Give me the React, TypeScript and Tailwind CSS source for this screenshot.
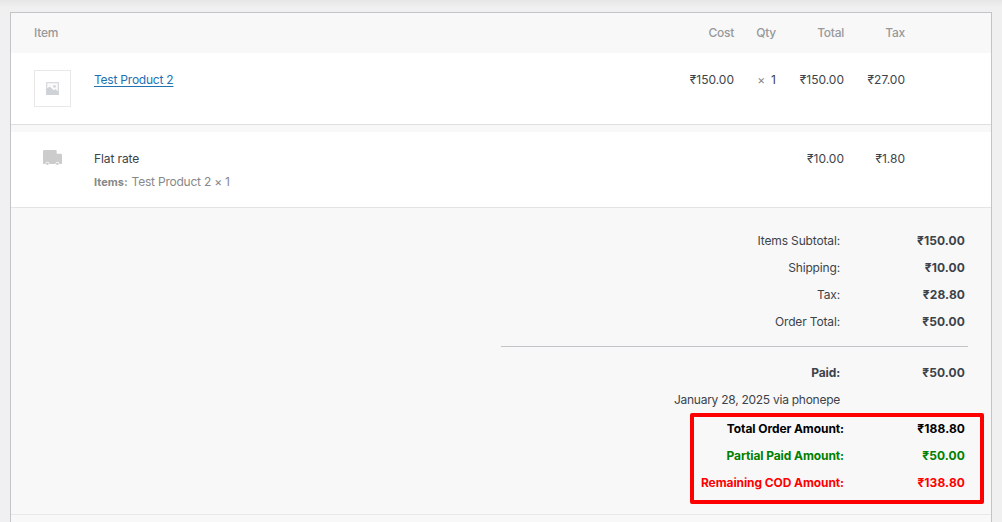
import React from 'react';

interface TotalLine {
  label: string;
  amount: string;
  className?: string;
}

const totals: TotalLine[] = [
  { label: 'Items Subtotal:', amount: '₹150.00' },
  { label: 'Shipping:', amount: '₹10.00' },
  { label: 'Tax:', amount: '₹28.80' },
  { label: 'Order Total:', amount: '₹50.00' },
];

const codTotals: TotalLine[] = [
  { label: 'Total Order Amount:', amount: '₹188.80', className: 'text-black' },
  { label: 'Partial Paid Amount:', amount: '₹50.00', className: 'text-[#008000]' },
  { label: 'Remaining COD Amount:', amount: '₹138.80', className: 'text-[#ff0000]' },
];

const columns =
  'grid grid-cols-[60px_1fr_80px_42px_68px_61px_86px] pl-[23px]';

function PlaceholderImage() {
  return (
    <svg width="13" height="13" viewBox="0 0 13 13">
      <rect width="13" height="13" fill="#d9dbde" />
      <path
        d="M1.3 1.3h10.4v8.2L9.6 7.3 7.8 8.6 3.8 5.2 1.3 6.5z"
        fill="#fafafa"
      />
      <path d="M0 7l3.8-2.2 4 3.8 1.8-1.3L13 10.2V13H0z" fill="#cfd2d6" />
      <circle cx="8.5" cy="4.4" r="1.4" fill="#d3d6da" />
    </svg>
  );
}

function TruckIcon() {
  return (
    <svg width="20" height="16" viewBox="0 0 20 16">
      <path
        d="M1.2 0h11.6q.9 0 .9.9v2.8h4q1.3 0 1.3 1.3v8.2q0 .8-.8.8H.8q-.8 0-.8-.8V1.2Q0 0 1.2 0z"
        fill="#ccc"
      />
      <circle cx="4.4" cy="13.7" r="1.9" fill="#fff" />
      <circle cx="14.4" cy="13.7" r="1.9" fill="#fff" />
      <circle cx="4.4" cy="13.7" r="1.3" fill="#ccc" />
      <circle cx="14.4" cy="13.7" r="1.3" fill="#ccc" />
    </svg>
  );
}

function TotalRow({ label, amount, className }: TotalLine) {
  return (
    <div className={`flex h-[27px] items-center justify-end ${className ?? ''}`}>
      <span className="tracking-[-0.15px]">{label}</span>
      <span className="w-[125px] text-right font-bold tracking-[0.1px]">{amount}</span>
    </div>
  );
}

export default function App() {
  return (
    <div className="h-[522px] overflow-hidden bg-[#f0f0f0] px-[10px] font-['Inter','Liberation_Sans',sans-serif] text-[12px] leading-[18px] text-[#3c434a]">
      <div className="-mx-[10px] h-3 bg-linear-to-b from-[#e6e6e6] to-[#f0f0f0] to-60%" />
      <div className="h-[530px] w-[982px] border border-[#c3c4c7] bg-[#f8f8f8]">
        <div className={`${columns} h-10 items-center font-medium tracking-[-0.25px] text-[#999]`}>
          <div className="col-span-2">Item</div>
          <div className="text-right">Cost</div>
          <div className="text-right">Qty</div>
          <div className="text-right">Total</div>
          <div className="text-right">Tax</div>
        </div>

        <div className={`${columns} h-[72px] border-b border-[#dfdfdf] bg-white pt-[17px]`}>
          <div className="flex h-[37px] w-[37px] items-center justify-center border border-[#e8e8e8]">
            <PlaceholderImage />
          </div>
          <div className="pt-px">
            <a className="tracking-[-0.22px] text-[#2271b1] underline underline-offset-2" href="#">
              Test Product 2
            </a>
          </div>
          <div className="pt-px text-right">₹150.00</div>
          <div className="pt-px text-right">
            <span className="mr-1.5 text-[#888]">×</span>1
          </div>
          <div className="pt-px text-right">₹150.00</div>
          <div className="pt-px text-right">₹27.00</div>
        </div>

        <div className={`${columns} mt-[7px] h-[76px] border-b border-[#e4e4e4] bg-white pt-[18px]`}>
          <div className="pl-[9px]">
            <TruckIcon />
          </div>
          <div>
            <div className="tracking-[-0.1px]">Flat rate</div>
            <div className="mt-[5px] tracking-[-0.22px] text-[#888]">
              <strong className="mr-1 text-[11px] font-bold tracking-normal">Items:</strong>
              Test Product 2 × 1
            </div>
          </div>
          <div />
          <div />
          <div className="text-right">₹10.00</div>
          <div className="text-right">₹1.80</div>
        </div>

        <div className="relative border-b border-[#e8e8e8] pt-[19px] pr-[23px] pb-[18px]">
          <div className="pr-[3px]">
            {totals.map((line) => (
              <TotalRow key={line.label} {...line} />
            ))}
          </div>
          <div className="mt-[11px] ml-auto w-[467px] border-t border-[#c3c4c7]" />
          <div className="mt-3 pr-[3px]">
            <TotalRow label="Paid:" amount="₹50.00" className="font-bold" />
            <div className="flex h-[27px] items-center justify-end pr-[125px] tracking-[-0.26px]">
              January 28, 2025 via phonepe
            </div>
          </div>
          <div className="mt-[2px] pr-[3px] font-bold">
            {codTotals.map((line) => (
              <div
                key={line.label}
                className={`flex h-[27px] items-center justify-end ${line.className}`}
              >
                <span className="tracking-[-0.09px]">{line.label}</span>
                <span className="w-[121px] text-right tracking-[0.1px]">{line.amount}</span>
              </div>
            ))}
          </div>
          {/* highlight around the COD amounts */}
          <div className="absolute right-[7px] bottom-[10px] h-[91px] w-[294px] rounded-[2px] border-4 border-[#ff0000]" />
        </div>
      </div>
    </div>
  );
}
